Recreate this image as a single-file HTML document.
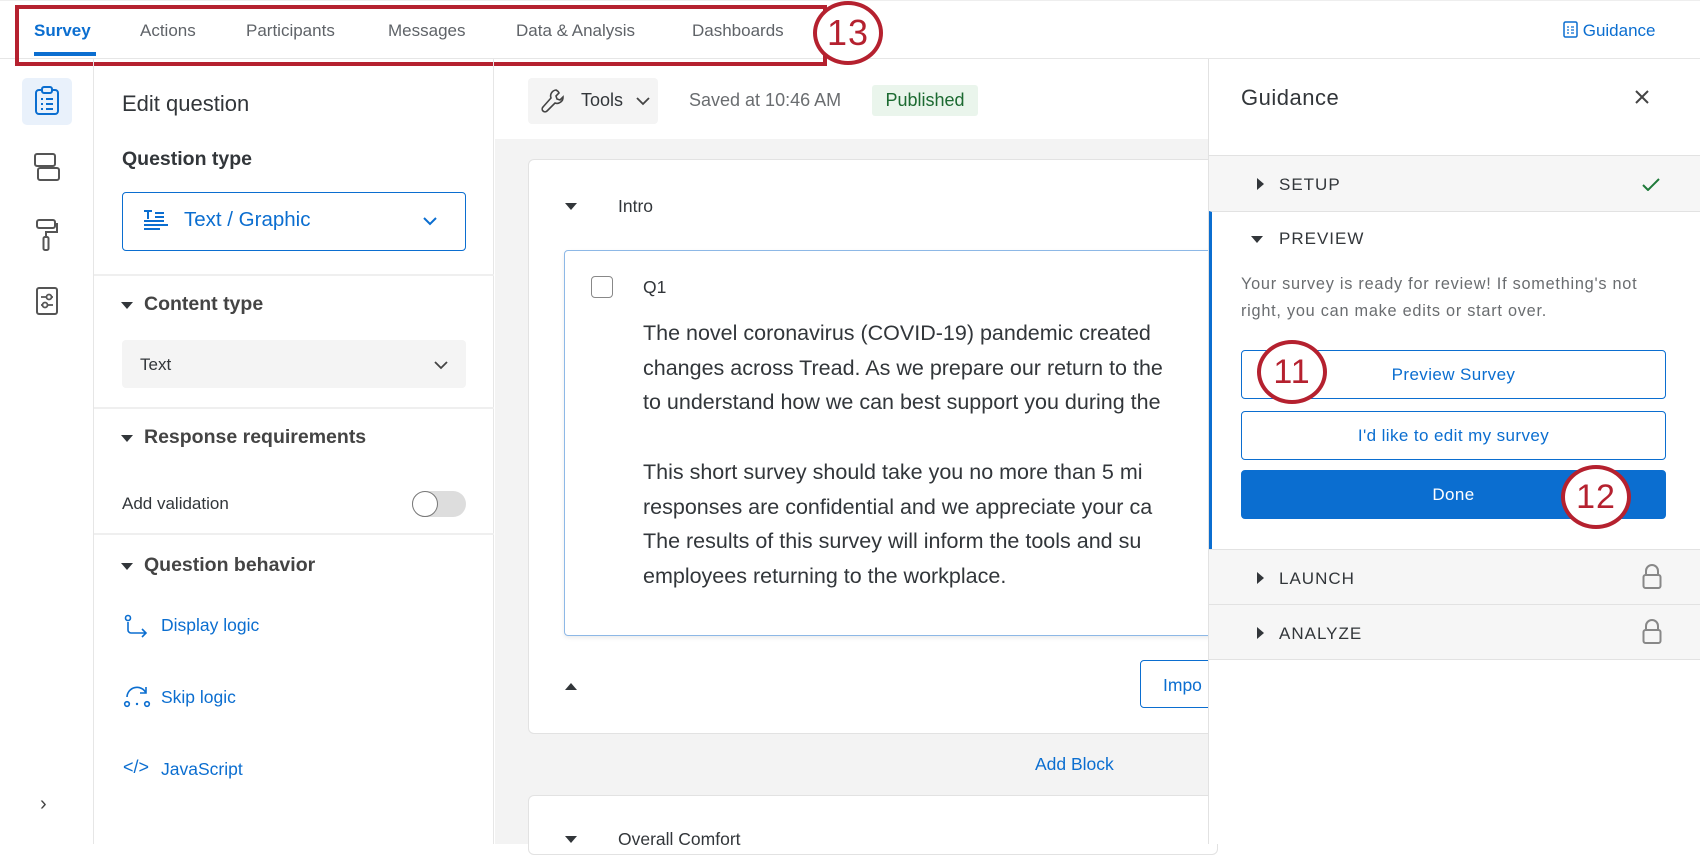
<!DOCTYPE html>
<html><head><meta charset="utf-8">
<style>
*{box-sizing:border-box;margin:0;padding:0}
body{width:1700px;height:844px;overflow:hidden;background:#fff;font-family:"Liberation Sans",sans-serif;color:#32363a;position:relative}
.a{position:absolute;white-space:nowrap}
.blue{color:#0b6ed0}
.tab{position:absolute;top:21px;font-size:17px;color:#5f6368}
.circ{position:absolute;border:4px solid #b5212f;border-radius:50%;background:#fff;color:#b5212f;font-size:34px;display:flex;align-items:center;justify-content:center;letter-spacing:1px}
.sec{position:absolute;left:1209px;width:491px;background:#f6f6f6;border-top:1px solid #e2e2e2;height:56px}
.sec .t{position:absolute;left:70px;top:19px;font-size:17px;letter-spacing:1px;color:#32363a}
.tri-r{position:absolute;left:48px;top:22px;width:0;height:0;border-top:6px solid transparent;border-bottom:6px solid transparent;border-left:7px solid #32363a}
.tri-d{width:0;height:0;border-left:6px solid transparent;border-right:6px solid transparent;border-top:7px solid #32363a;position:absolute}
.btn{position:absolute;left:1241px;width:425px;height:49px;border:1.5px solid #0b6ed0;border-radius:4px;color:#0b6ed0;font-size:17px;letter-spacing:.4px;display:flex;align-items:center;justify-content:center;background:#fff}
.qt{font-size:21.5px;line-height:34.7px;color:#32363a}
</style></head><body>
<div class="a" style="left:0;top:0;width:1700px;height:59px;border-bottom:1px solid #e6e6e6;border-top:1px solid #eee"></div>
<div class="tab" style="left:34px;color:#0b6ed0;font-weight:bold">Survey</div>
<div class="a" style="left:34px;top:52px;width:62px;height:4px;background:#0b6ed0"></div>
<div class="tab" style="left:140px">Actions</div>
<div class="tab" style="left:246px">Participants</div>
<div class="tab" style="left:388px">Messages</div>
<div class="tab" style="left:516px">Data &amp; Analysis</div>
<div class="tab" style="left:692px">Dashboards</div>
<div class="a" style="left:15px;top:5px;width:812px;height:61px;border:4.5px solid #b5212f"></div>
<div class="circ" style="left:813px;top:1px;width:70px;height:64px;font-size:36px">13</div>
<div class="a blue" style="left:1563px;top:21px;font-size:17px"><svg width="15" height="17" viewBox="0 0 15 17" style="vertical-align:-2px"><rect x="1" y="1" width="13" height="15" rx="1.5" fill="none" stroke="#0b6ed0" stroke-width="1.5"/><path d="M4 6h2M4 9h2M4 12h2M8 6h3M8 9h3M8 12h3" stroke="#0b6ed0" stroke-width="1.2"/></svg> Guidance</div>

<div class="a" style="left:0;top:59px;width:94px;height:785px;border-right:1px solid #e6e6e6"></div>
<div class="a" style="left:22px;top:78px;width:50px;height:47px;background:#e9f1fb;border-radius:5px"></div>
<svg class="a" style="left:34px;top:86px" width="26" height="30" viewBox="0 0 26 30"><rect x="2" y="4" width="22" height="24" rx="3" fill="none" stroke="#0b6ed0" stroke-width="2"/><rect x="8" y="1" width="10" height="6" rx="2" fill="#e9f1fb" stroke="#0b6ed0" stroke-width="2"/><path d="M7 13h2M12 13h7M7 18h2M12 18h7M7 23h2M12 23h7" stroke="#0b6ed0" stroke-width="2"/></svg>
<svg class="a" style="left:33px;top:152px" width="28" height="30" viewBox="0 0 28 30"><rect x="2" y="2" width="20" height="12" rx="2" fill="none" stroke="#555" stroke-width="2"/><rect x="5" y="16" width="21" height="12" rx="2" fill="none" stroke="#555" stroke-width="2"/></svg>
<svg class="a" style="left:35px;top:218px" width="24" height="34" viewBox="0 0 24 34"><rect x="2" y="2" width="18" height="8" rx="2" fill="none" stroke="#555" stroke-width="2"/><path d="M20 6h2v8H11v5" fill="none" stroke="#555" stroke-width="2"/><rect x="8.5" y="19" width="5" height="13" rx="1.5" fill="none" stroke="#555" stroke-width="2"/></svg>
<svg class="a" style="left:35px;top:286px" width="24" height="30" viewBox="0 0 24 30"><rect x="2" y="2" width="20" height="26" rx="2" fill="none" stroke="#555" stroke-width="2"/><path d="M6 11h12M6 19h12" stroke="#555" stroke-width="1.8"/><circle cx="14" cy="11" r="2.5" fill="#fff" stroke="#555" stroke-width="1.8"/><circle cx="10" cy="19" r="2.5" fill="#fff" stroke="#555" stroke-width="1.8"/></svg>
<div class="a" style="left:40px;top:793px;font-size:20px;color:#444">&#x203A;</div>

<div class="a" style="left:94px;top:59px;width:400px;height:785px;border-right:1px solid #e6e6e6"></div>
<div class="a" style="left:122px;top:91px;font-size:22px;color:#32363a">Edit question</div>
<div class="a" style="left:122px;top:148px;font-size:19.5px;font-weight:bold">Question type</div>
<div class="a" style="left:122px;top:192px;width:344px;height:59px;border:1.5px solid #0b6ed0;border-radius:4px"></div>
<svg class="a" style="left:143px;top:209px" width="26" height="24" viewBox="0 0 26 24"><path d="M1 2h8M5 2v8M12 4h9M12 8h9M1 12h20M1 16h24M1 20h16" stroke="#0b6ed0" stroke-width="2"/></svg>
<div class="a blue" style="left:184px;top:208px;font-size:20.5px">Text / Graphic</div>
<svg class="a" style="left:422px;top:216px" width="16" height="10" viewBox="0 0 16 10"><path d="M2 2l6 6 6-6" fill="none" stroke="#0b6ed0" stroke-width="2"/></svg>
<div class="a" style="left:94px;top:274px;width:400px;height:2px;background:#efefef"></div>
<div class="tri-d" style="left:121px;top:302px"></div>
<div class="a" style="left:144px;top:293px;font-size:19.5px;font-weight:bold;color:#444">Content type</div>
<div class="a" style="left:122px;top:340px;width:344px;height:48px;background:#f4f4f4;border-radius:4px"></div>
<div class="a" style="left:140px;top:355px;font-size:17px">Text</div>
<svg class="a" style="left:434px;top:361px" width="14" height="9" viewBox="0 0 14 9"><path d="M1 1l6 6 6-6" fill="none" stroke="#444" stroke-width="1.8"/></svg>
<div class="a" style="left:94px;top:407px;width:400px;height:2px;background:#efefef"></div>
<div class="tri-d" style="left:121px;top:435px"></div>
<div class="a" style="left:144px;top:426px;font-size:19.5px;font-weight:bold;color:#444">Response requirements</div>
<div class="a" style="left:122px;top:494px;font-size:17px">Add validation</div>
<div class="a" style="left:412px;top:491px;width:54px;height:26px;border-radius:13px;background:#ddd"></div>
<div class="a" style="left:412px;top:491px;width:26px;height:26px;border-radius:50%;background:#fff;border:1.5px solid #777"></div>
<div class="a" style="left:94px;top:533px;width:400px;height:2px;background:#efefef"></div>
<div class="tri-d" style="left:121px;top:563px"></div>
<div class="a" style="left:144px;top:554px;font-size:19.5px;font-weight:bold;color:#444">Question behavior</div>
<svg class="a" style="left:124px;top:614px" width="26" height="24" viewBox="0 0 26 24"><circle cx="4" cy="4" r="2.5" fill="none" stroke="#0b6ed0" stroke-width="1.6"/><path d="M4 8v8a3 3 0 0 0 3 3h15M18 15l4 4-4 4" fill="none" stroke="#0b6ed0" stroke-width="1.6"/></svg>
<div class="a blue" style="left:161px;top:615px;font-size:17.5px">Display logic</div>
<svg class="a" style="left:123px;top:683px" width="28" height="26" viewBox="0 0 28 26"><path d="M4 14a10 10 0 0 1 19-4M23 4v6h-6" fill="none" stroke="#0b6ed0" stroke-width="1.6"/><circle cx="4" cy="21" r="2.3" fill="none" stroke="#0b6ed0" stroke-width="1.6"/><circle cx="14" cy="21" r="1.2" fill="#0b6ed0"/><circle cx="24" cy="21" r="2.3" fill="none" stroke="#0b6ed0" stroke-width="1.6"/></svg>
<div class="a blue" style="left:161px;top:687px;font-size:17.5px">Skip logic</div>
<div class="a blue" style="left:123px;top:757px;font-size:18px">&lt;/&gt;</div>
<div class="a blue" style="left:161px;top:759px;font-size:17.5px">JavaScript</div>

<div class="a" style="left:495px;top:139px;width:713px;height:705px;background:#f3f3f3"></div>
<div class="a" style="left:528px;top:78px;width:130px;height:46px;background:#f4f4f4;border-radius:4px"></div>
<svg class="a" style="left:541px;top:88px" width="24" height="26" viewBox="0 0 24 26"><path d="M15 2a6 6 0 0 0-5 8L2 19a2.5 2.5 0 0 0 4 4l8-8a6 6 0 0 0 8-6l-3 3-3-1-1-3 3-3a6 6 0 0 0-3-3z" fill="none" stroke="#444" stroke-width="1.6"/></svg>
<div class="a" style="left:581px;top:90px;font-size:18px">Tools</div>
<svg class="a" style="left:636px;top:97px" width="14" height="9" viewBox="0 0 14 9"><path d="M1 1l6 6 6-6" fill="none" stroke="#444" stroke-width="1.8"/></svg>
<div class="a" style="left:689px;top:90px;font-size:18px;color:#6a6d70">Saved at 10:46 AM</div>
<div class="a" style="left:872px;top:85px;width:106px;height:31px;background:#eaf5ec;border-radius:3px;color:#1c6a31;font-size:18px;text-align:center;line-height:31px">Published</div>

<div class="a" style="left:528px;top:159px;width:690px;height:575px;background:#fff;border:1px solid #e2e2e2;border-radius:6px"></div>
<div class="tri-d" style="left:565px;top:203px"></div>
<div class="a" style="left:618px;top:196px;font-size:17.5px">Intro</div>
<div class="a" style="left:564px;top:250px;width:660px;height:386px;border:1.5px solid #8db8e6;border-radius:4px;box-shadow:0 2px 4px rgba(0,0,0,.08)"></div>
<div class="a" style="left:591px;top:276px;width:22px;height:22px;border:1.5px solid #888;border-radius:4px"></div>
<div class="a" style="left:643px;top:277px;font-size:17.5px">Q1</div>
<div class="a qt" style="left:643px;top:316px">The novel coronavirus (COVID-19) pandemic created<br>changes across Tread. As we prepare our return to the<br>to understand how we can best support you during the<br><br>This short survey should take you no more than 5 mi<br>responses are confidential and we appreciate your ca<br>The results of this survey will inform the tools and su<br>employees returning to the workplace.</div>
<div class="a" style="left:565px;top:683px;width:0;height:0;border-left:6px solid transparent;border-right:6px solid transparent;border-bottom:7px solid #32363a"></div>
<div class="a" style="left:1140px;top:660px;width:90px;height:48px;border:1.5px solid #0b6ed0;border-radius:4px;background:#fff"></div>
<div class="a blue" style="left:1163px;top:675px;font-size:17.5px">Impo</div>
<div class="a blue" style="left:1035px;top:754px;font-size:17.5px">Add Block</div>
<div class="a" style="left:528px;top:795px;width:690px;height:60px;background:#fff;border:1px solid #e2e2e2;border-radius:6px"></div>
<div class="tri-d" style="left:565px;top:836px"></div>
<div class="a" style="left:618px;top:829px;font-size:17.5px">Overall Comfort</div>

<div class="a" style="left:1208px;top:59px;width:492px;height:785px;background:#fff;border-left:1px solid #e2e2e2"></div>
<div class="a" style="left:1241px;top:85px;font-size:22px;letter-spacing:.5px">Guidance</div>
<svg class="a" style="left:1634px;top:89px" width="16" height="16" viewBox="0 0 16 16"><path d="M2 2l12 12M14 2L2 14" stroke="#444" stroke-width="2"/></svg>
<div class="sec" style="top:155px"><div class="tri-r"></div><div class="t">SETUP</div>
<svg style="position:absolute;left:433px;top:21px" width="18" height="14" viewBox="0 0 18 14"><path d="M1 8l5 5L17 2" fill="none" stroke="#1f7a3a" stroke-width="2"/></svg></div>
<div class="a" style="left:1209px;top:211px;width:491px;height:338px;background:#fff;border-top:1px solid #e2e2e2;border-left:3px solid #0b6ed0"></div>
<div class="tri-d" style="left:1251px;top:236px"></div>
<div class="a" style="left:1279px;top:229px;font-size:17px;letter-spacing:1px">PREVIEW</div>
<div class="a" style="left:1241px;top:271px;font-size:16.3px;line-height:27px;color:#6a6d70;letter-spacing:.75px">Your survey is ready for review! If something's not<br>right, you can make edits or start over.</div>
<div class="btn" style="top:350px">Preview Survey</div>
<div class="btn" style="top:411px">I'd like to edit my survey</div>
<div class="btn" style="top:470px;background:#0b6ed0;color:#fff">Done</div>
<div class="circ" style="left:1257px;top:340px;width:70px;height:64px">11</div>
<div class="circ" style="left:1561px;top:465px;width:70px;height:64px">12</div>
<div class="sec" style="top:549px"><div class="tri-r"></div><div class="t">LAUNCH</div>
<svg style="position:absolute;left:433px;top:13px" width="20" height="27" viewBox="0 0 20 27"><path d="M4 12V8a6 6 0 0 1 12 0v4" fill="none" stroke="#888" stroke-width="2"/><rect x="1.5" y="12" width="17" height="13" rx="2" fill="none" stroke="#888" stroke-width="2"/></svg></div>
<div class="sec" style="top:604px;border-bottom:1px solid #e2e2e2"><div class="tri-r"></div><div class="t">ANALYZE</div>
<svg style="position:absolute;left:433px;top:13px" width="20" height="27" viewBox="0 0 20 27"><path d="M4 12V8a6 6 0 0 1 12 0v4" fill="none" stroke="#888" stroke-width="2"/><rect x="1.5" y="12" width="17" height="13" rx="2" fill="none" stroke="#888" stroke-width="2"/></svg></div>
</body></html>
